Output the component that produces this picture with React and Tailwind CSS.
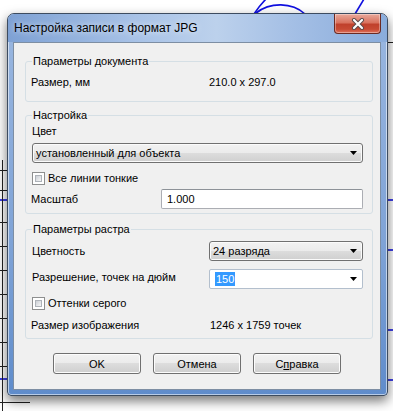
import React from "react";

const font = { fontFamily: '"Liberation Sans", Arial, sans-serif' };

function Backdrop() {
  // CAD drawing visible around the dialog
  return (
    <svg className="absolute inset-0" width="393" height="411" viewBox="0 0 393 411">
      <g stroke="#1010e0" strokeWidth="1.6" fill="none">
        <path d="M254 14 C258 8 262 3 266 -1" />
        <path d="M256 13 C270 2 292 2 305 14" />
        <path d="M355 14 L364 -1" />
        <path d="M386 200 H393" />
        <path d="M386 250 H393" />
        <path d="M386 330 H393" />
        <path d="M386 380 H393" />
        <path d="M0 200 H8" />
        <path d="M0 379 H8" />
      </g>
      <g stroke="#222" strokeWidth="1" fill="none">
        <path d="M386 42.5 H393" />
        <path d="M0 170.5 H8 M0 190.5 H8 M0 222.5 H8 M0 246.5 H8 M0 270.5 H8 M0 294.5 H8 M0 318.5 H8 M0 342.5 H8 M0 366.5 H8 M0 402.5 H30" />
        <path d="M2.5 160 V411" />
      </g>
    </svg>
  );
}

function Checkbox({ label }) {
  return (
    <div className="flex items-center h-[14px]">
      <div className="w-[13px] h-[13px] border border-[#8e8f8f] bg-white p-[2px]">
        <div className="w-full h-full border border-[#aeb3b9] bg-[linear-gradient(135deg,#cbcfd5,#f6f6f6)]" />
      </div>
      <span className="ml-[3px]">{label}</span>
    </div>
  );
}

function Arrow() {
  return (
    <svg width="7" height="4" viewBox="0 0 7 4">
      <path d="M0 0 H7 L3.5 4 Z" fill="#000" />
    </svg>
  );
}

function Select({ value, className }) {
  return (
    <div
      className={`h-[20px] flex items-center justify-between border border-[#707070] rounded-[3px] bg-[linear-gradient(#f2f2f2_0%,#ebebeb_50%,#dddddd_50%,#cfcfcf_100%)] shadow-[inset_0_0_0_1px_#fbfbfb] pl-[3px] pr-[5px] ${className}`}
    >
      <span>{value}</span>
      <Arrow />
    </div>
  );
}

function Group({ title, className, children }) {
  return (
    <div className={`relative border border-[#d5dfe5] rounded-[3px] box-border ${className}`}>
      <span className="absolute left-[6px] top-[-8px] px-[1px] leading-[14px] bg-[#f0f0f0]">{title}</span>
      {children}
    </div>
  );
}

function Button({ children }) {
  return (
    <div className="w-[88px] h-[21px] flex items-center justify-center border border-[#707070] rounded-[3px] bg-[linear-gradient(#f2f2f2_0%,#ebebeb_50%,#dddddd_50%,#cfcfcf_100%)] shadow-[inset_0_0_0_1px_#fcfcfc]">
      {children}
    </div>
  );
}

export default function App() {
  return (
    <div className="relative w-[393px] h-[411px] overflow-hidden bg-white" style={font}>
      <Backdrop />

      {/* Dialog window */}
      <div className="absolute left-[7px] top-[13px] w-[381px] h-[383px] flex flex-col border border-[#3d4c60] rounded-t-[7px] rounded-b-[4px] bg-[linear-gradient(to_bottom,#9ab7e0,#7fa3d6_60%,#5f8ccb)] shadow-[0_5px_12px_rgba(0,0,0,0.55),inset_0_0_0_1px_rgba(255,255,255,0.55)]">
        {/* Title bar */}
        <div className="relative h-[28px] shrink-0 flex items-center pl-[6px] rounded-t-[6px] bg-[linear-gradient(to_right,#7ea1d4,#a9c3e7_35%,#bcd1ec_55%,#a4bfe5_75%,#8aacdb)]">
          <span className="text-[12px] text-black [text-shadow:0_0_6px_rgba(255,255,255,0.9)]">
            Настройка записи в формат JPG
          </span>
          <div className="absolute top-0 right-[6px] w-[47px] h-[20px] flex items-center justify-center border border-t-0 border-[#6b2a22] rounded-b-[4px] bg-[linear-gradient(#e9a99b_0%,#d9735f_45%,#c0412c_55%,#c74a33_80%,#e0725c_100%)] shadow-[inset_0_0_0_1px_rgba(255,255,255,0.35)]">
            <svg width="14" height="12" viewBox="0 0 14 12">
              <path d="M3 2 L11 10 M11 2 L3 10" stroke="#5a4a4a" strokeWidth="4" strokeLinecap="round" />
              <path d="M3 2 L11 10 M11 2 L3 10" stroke="#ffffff" strokeWidth="2.2" strokeLinecap="round" />
            </svg>
          </div>
        </div>

        {/* Client area */}
        <div className="ml-[5px] mr-[6px] h-[348px] shrink-0 border border-[#7d8ea3] bg-[#f0f0f0] text-[11px] leading-[14px] text-black pl-[11px] pt-[18px] flex flex-col">
          <Group title="Параметры документа" className="w-[348px] h-[41px]">
            <div className="flex pl-[5px] pt-[13px]">
              <span className="w-[178px]">Размер, мм</span>
              <span>210.0 x 297.0</span>
            </div>
          </Group>

          <Group title="Настройка" className="w-[348px] h-[99px] mt-[13px]">
            <div className="flex flex-col pt-[8px]">
              <span className="pl-[6px]">Цвет</span>
              <Select value="установленный для объекта" className="mt-[5px] ml-[6px] mr-[9px]" />
              <div className="mt-[8px] ml-[6px]">
                <Checkbox label="Все линии тонкие" />
              </div>
              <div className="mt-[4px] flex items-center pl-[5px] pr-[9px]">
                <span className="w-[130px]">Масштаб</span>
                <div className="flex-1 h-[20px] flex items-center border border-[#abadb3] border-t-[#8d9298] rounded-[2px] bg-white pl-[5px]">
                  1.000
                </div>
              </div>
            </div>
          </Group>

          <Group title="Параметры растра" className="w-[348px] h-[110px] mt-[15px]">
            <div className="flex flex-col pt-[11px]">
              <div className="flex items-center pl-[6px] pr-[9px]">
                <span className="w-[177px]">Цветность</span>
                <Select value="24 разряда" className="flex-1" />
              </div>
              <div className="mt-[8px] flex items-center pl-[6px] pr-[9px]">
                <span className="w-[177px] mb-[4px]">Разрешение, точек на дюйм</span>
                <div className="flex-1 h-[20px] flex items-center justify-between border border-[#b3bfcd] rounded-[2px] bg-white pl-[5px] pr-[5px]">
                  <span className="bg-[#3399ff] text-white px-[1px]">150</span>
                  <Arrow />
                </div>
              </div>
              <div className="mt-[7px] ml-[6px]">
                <Checkbox label="Оттенки серого" />
              </div>
              <div className="mt-[8px] flex pl-[5px]">
                <span className="w-[179px]">Размер изображения</span>
                <span>1246 x 1759 точек</span>
              </div>
            </div>
          </Group>

          <div className="mt-[14px] ml-[28px] flex gap-[12px]">
            <Button>OK</Button>
            <Button>Отмена</Button>
            <Button>
              <span>
                С<span className="underline">п</span>равка
              </span>
            </Button>
          </div>
        </div>
      </div>
    </div>
  );
}
